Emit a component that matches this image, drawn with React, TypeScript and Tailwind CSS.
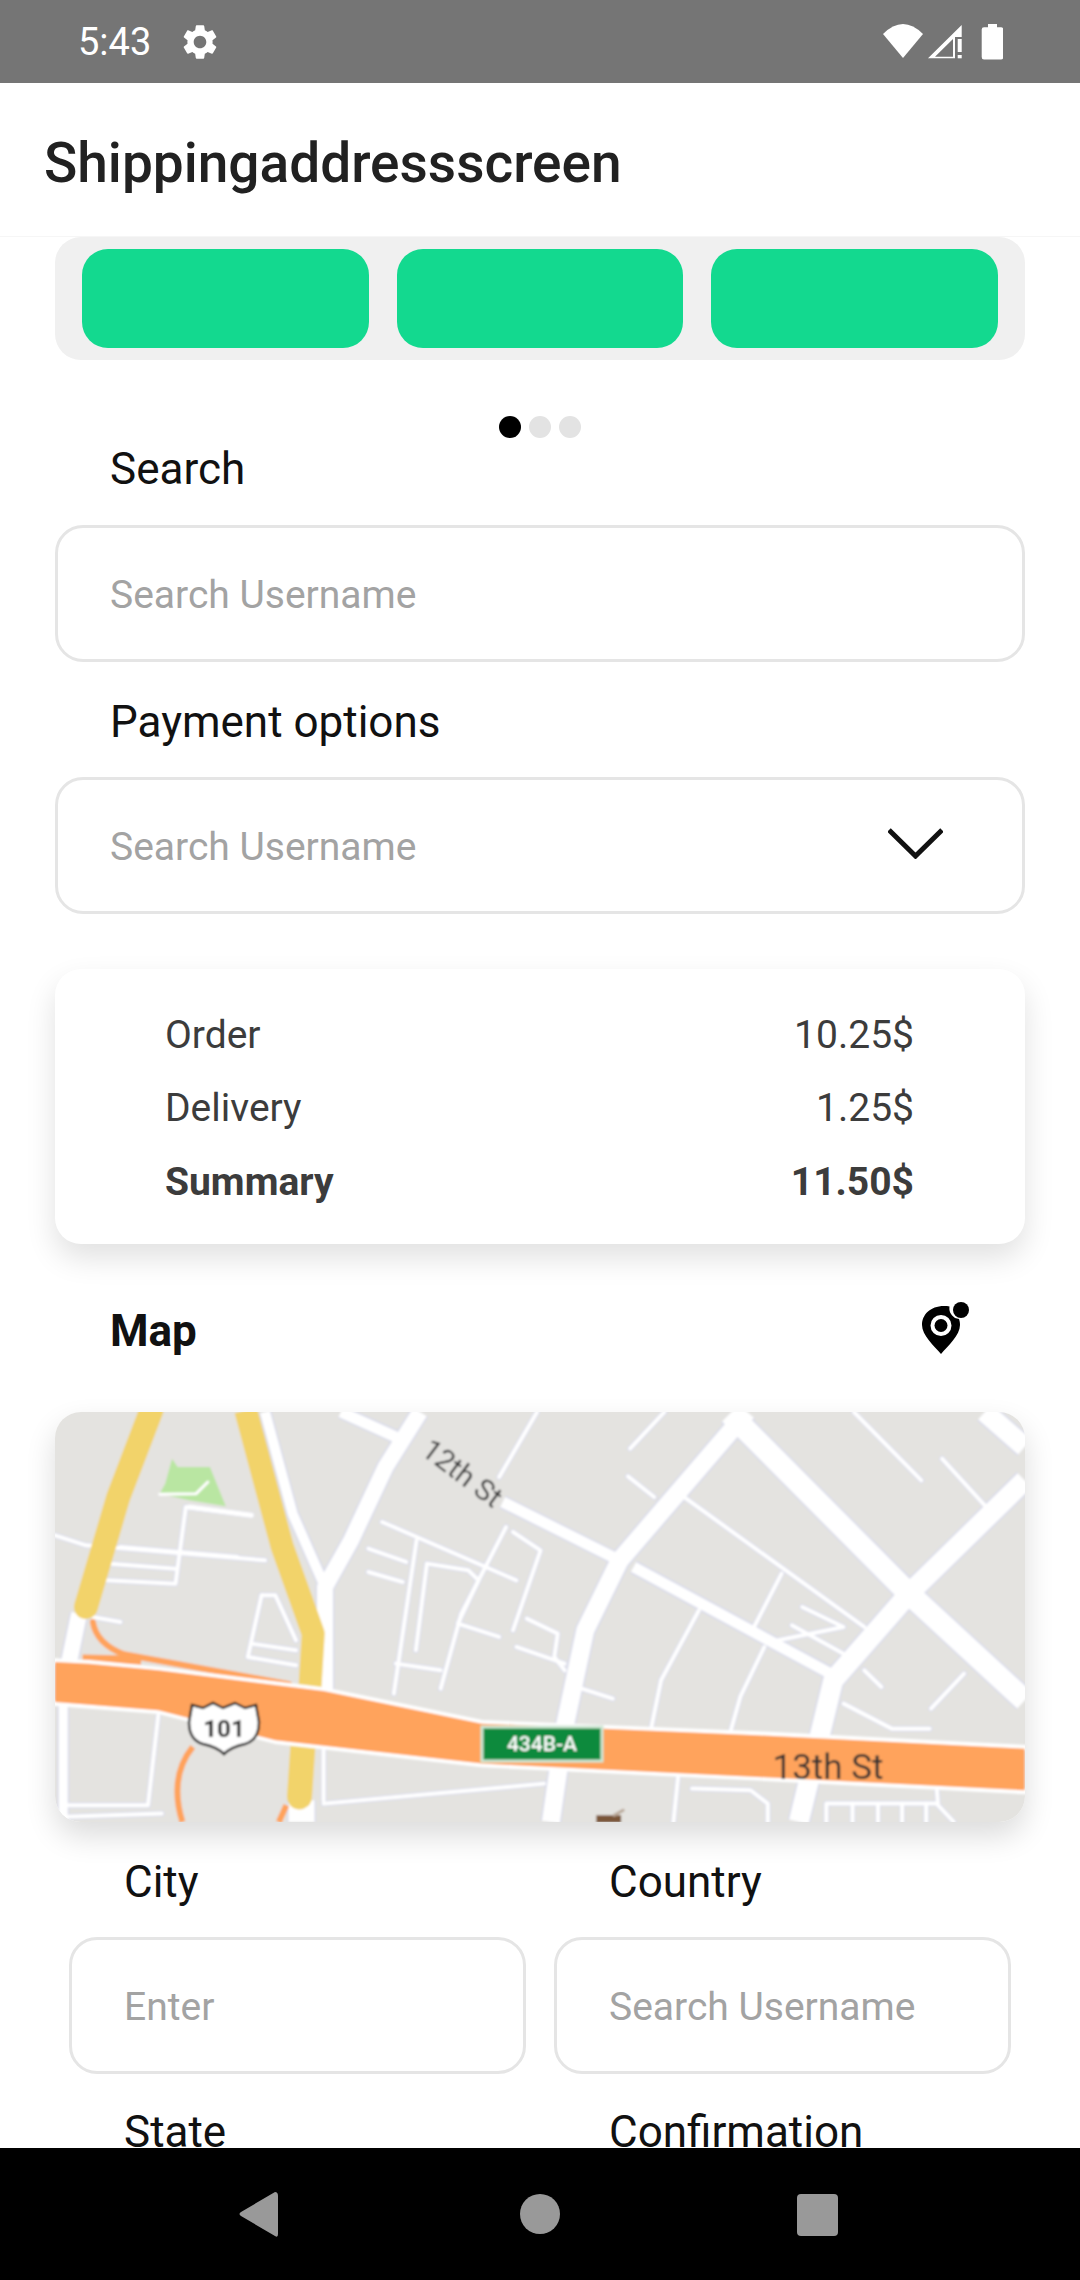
const Field = ({ text, className = "" }: { text: string; className?: string }) => (
  <div className={`flex h-[137px] items-center rounded-[28px] border-[3px] border-[#e5e5e5] bg-white pl-[52px] pr-[52px] pt-[3px] text-[39px] text-[#a3a3a3] ${className}`}>
    {text}
  </div>
);

const Label = ({ text, className = "" }: { text: string; className?: string }) => (
  <div className={`h-[49px] pl-[55px] text-[44px] leading-[49px] text-[#111111] ${className}`}>{text}</div>
);

const Row = ({ a, b, bold = false }: { a: string; b: string; bold?: boolean }) => (
  <div className={`flex h-[73.5px] items-center justify-between text-[39px] text-[#3c3c3c] ${bold ? "font-bold" : ""}`}>
    <span>{a}</span>
    <span>{b}</span>
  </div>
);

const casing = "#d8daea";

const major: [string, number][] = [
  ["M495 95 L575 170", 11],
  ["M730 365 L890 530", 11],
  ["M920 560 L1215 890", 11],
  ["M610 95 L560 260 L510 480 L472 620 L472 930", 16],
  ["M1085 95 L900 540 L850 750 L820 1040 L800 1325", 18],
  ["M1060 100 L1320 640 L1488 960", 22],
  ["M1488 300 L1320 640 L1210 900 L1160 1325", 20],
  ["M1430 95 L1488 200", 20],
  ["M385 95 L425 400 L472 620", 10],
  ["M115 700 L100 850", 16],
  ["M92 965 L92 1325", 9],
  ["M438 1260 L438 1325", 26],
];

const minor: string[] = [
  "M780 95 L725 290",
  "M965 95 L915 205",
  "M1240 95 L1338 300",
  "M1368 235 L1430 375",
  "M912 288 L950 350",
  "M990 345 L1255 740",
  "M555 425 L750 600",
  "M535 505 L590 545",
  "M535 575 L585 605",
  "M605 480 L572 940",
  "M735 440 L670 700 L640 925",
  "M745 455 L785 510 L745 750",
  "M620 550 L680 570 L695 600 L665 730 L725 770",
  "M620 550 L604 810",
  "M765 715 L810 760 L805 830 L820 870",
  "M750 800 L820 850",
  "M575 850 L640 870",
  "M845 925 L890 955",
  "M1015 690 L960 900 L945 1050",
  "M1110 800 L1075 950 L1060 1060",
  "M1135 580 L1095 740",
  "M1165 680 L1225 740 L1130 780",
  "M1150 735 L1225 820",
  "M1255 870 L1280 920",
  "M1400 880 L1352 985",
  "M1225 970 L1295 1045 L1350 1045",
  "M80 465 L125 495 L385 540",
  "M175 500 L345 530",
  "M160 550 L255 565",
  "M155 600 L255 610 L270 380 L365 405",
  "M380 645 L360 830 L430 855",
  "M380 645 L400 645 L430 780",
  "M365 790 L430 810",
  "M135 710 L175 725",
  "M230 1005 L215 1275 L90 1275",
  "M85 1310 L235 1300",
  "M470 1270 L790 1210",
  "M985 1185 L978 1325",
  "M1005 1225 L1090 1230 L1115 1270 L1115 1325",
  "M1200 1325 L1200 1270 L1360 1270 L1385 1325",
  "M1238 1270 L1238 1325",
  "M1275 1270 L1275 1325",
  "M1310 1270 L1310 1325",
  "M1345 1270 L1345 1325",
  "M1360 1215 L1362 1270",
  "M470 1110 L470 1260",
];

const MapView = () => (
  <svg viewBox="0 0 970 410" className="block h-full w-full" xmlns="http://www.w3.org/2000/svg">
    <defs>
      <filter id="soft" filterUnits="userSpaceOnUse" x="-20" y="-20" width="1010" height="450">
        <feGaussianBlur stdDeviation="0.9" />
      </filter>
    </defs>
    <g filter="url(#soft)">
      <rect x="-20" y="-20" width="1010" height="450" fill="#e4e3e0" />
      <g transform="translate(-55.1 -31.67) scale(0.6887 0.3333)" fill="none" strokeLinecap="round" strokeLinejoin="round">
        {minor.map((d, i) => (
          <path key={`c${i}`} d={d} stroke={casing} strokeWidth={6} vectorEffect="non-scaling-stroke" />
        ))}
        {major.map(([d, w], i) => (
          <path key={`d${i}`} d={d} stroke={casing} strokeWidth={w + 3} strokeLinecap="butt" vectorEffect="non-scaling-stroke" />
        ))}
        {minor.map((d, i) => (
          <path key={`e${i}`} d={d} stroke="#ffffff" strokeWidth={4} vectorEffect="non-scaling-stroke" />
        ))}
        {major.map(([d, w], i) => (
          <path key={`f${i}`} d={d} stroke="#ffffff" strokeWidth={w} strokeLinecap="butt" vectorEffect="non-scaling-stroke" />
        ))}
        <polygon points="250,235 258,260 305,260 328,378 275,360 232,340 240,310" fill="#b9e6a2" />
        <path d="M275 380 L365 405" stroke="#ffffff" strokeWidth={5} vectorEffect="non-scaling-stroke" />
        <path d="M232 342 L285 340 L302 305" stroke="#ffffff" strokeWidth={3} vectorEffect="non-scaling-stroke" />
        <path d="M220 90 L172 350 L125 680" stroke="#f2d36a" strokeWidth={24} vectorEffect="non-scaling-stroke" />
        <path d="M357 90 L410 500 L455 760 L450 930" stroke="#f2d36a" strokeWidth={23} strokeLinecap="butt" vectorEffect="non-scaling-stroke" />
        <path d="M440 1095 L435 1250" stroke="#f2d36a" strokeWidth={25} vectorEffect="non-scaling-stroke" />
        <path d="M135 725 Q140 790 180 822 L420 912" stroke="#ffa35c" strokeWidth={6} vectorEffect="non-scaling-stroke" />
        <path d="M120 836 L205 840" stroke="#ffa35c" strokeWidth={9} strokeLinecap="butt" vectorEffect="non-scaling-stroke" />
        <path d="M280 1100 Q245 1190 265 1325" stroke="#ffa35c" strokeWidth={6} strokeLinecap="butt" vectorEffect="non-scaling-stroke" />
        <path d="M416 1275 L405 1325" stroke="#ffa35c" strokeWidth={6} strokeLinecap="butt" vectorEffect="non-scaling-stroke" />
        <path d="M80 843 L130 848 L230 868 L470 930 L700 1028 L1100 1062 L1488 1103" stroke="#ffffff" strokeWidth={6} vectorEffect="non-scaling-stroke" />
        <path d="M80 968 L230 992 L400 1082 L700 1152 L1100 1192 L1488 1233" stroke="#ffffff" strokeWidth={6} vectorEffect="non-scaling-stroke" />
        <polygon points="80,845 130,850 230,870 470,932 700,1030 1100,1065 1488,1105 1488,1230 1100,1190 700,1150 400,1080 230,990 80,965" fill="#ffa35c" />
        <rect x="866" y="1305" width="36" height="22" fill="#795438" />
        <path d="M892 1305 L905 1290" stroke="#b9a898" strokeWidth={3} vectorEffect="non-scaling-stroke" />
      </g>
      <path d="M137 293 L148 296 L158 291 L168 296 L180 291 L190 296 L201 293 L204 310 Q204 328 190 332 Q176 335 169 342 Q162 335 148 332 Q134 328 134 310 Z" fill="#ffffff" stroke="#222222" strokeWidth="2.5" />
      <text x="169" y="325" textAnchor="middle" fontSize="24" fontWeight="700" fill="#222222" fontFamily="Roboto, sans-serif">101</text>
      <rect x="427" y="315" width="120" height="34" fill="#0f8a3e" stroke="#cfe6d4" strokeWidth="3" />
      <text x="487" y="339" textAnchor="middle" fontSize="21" fontWeight="500" fill="#ffffff" fontFamily="Roboto, sans-serif">434B-A</text>
      <text x="773" y="367" textAnchor="middle" fontSize="35" fill="#333333" fontFamily="Roboto, sans-serif">13th St</text>
      <text transform="translate(406 63) rotate(37)" textAnchor="middle" dominantBaseline="middle" fontSize="29" fill="#3a3a3a" fontFamily="Roboto, sans-serif">12th St</text>
    </g>
  </svg>
);

export default function App() {
  return (
    <div className="flex h-[2280px] w-[1080px] flex-col overflow-hidden bg-white font-['Roboto',sans-serif]">
      <div className="flex h-[83px] shrink-0 items-center justify-between bg-[#757575] pl-[78px] pr-[77px] text-white">
        <div className="flex items-center gap-[28px]">
          <span className="text-[38px] leading-none">5:43</span>
          <svg viewBox="0 0 24 24" className="h-[42px] w-[42px]" fill="#ffffff">
            <path d="M19.14 12.94c.04-.3.06-.61.06-.94 0-.32-.02-.64-.07-.94l2.03-1.58c.18-.14.23-.41.12-.61l-1.92-3.32c-.12-.22-.37-.29-.59-.22l-2.39.96c-.5-.38-1.03-.7-1.62-.94l-.36-2.54c-.04-.24-.24-.41-.48-.41h-3.84c-.24 0-.43.17-.47.41l-.36 2.54c-.59.24-1.13.57-1.62.94l-2.39-.96c-.22-.08-.47 0-.59.22L2.74 8.87c-.12.21-.08.47.12.61l2.03 1.58c-.05.3-.09.63-.09.94s.02.64.07.94l-2.03 1.58c-.18.14-.23.41-.12.61l1.92 3.32c.12.22.37.29.59.22l2.39-.96c.5.38 1.03.7 1.62.94l.36 2.54c.05.24.24.41.48.41h3.84c.24 0 .44-.17.47-.41l.36-2.54c.59-.24 1.13-.56 1.62-.94l2.39.96c.22.08.47 0 .59-.22l1.92-3.32c.12-.22.07-.47-.12-.61l-2.01-1.58zM12 15.6c-1.98 0-3.6-1.62-3.6-3.6s1.62-3.6 3.6-3.6 3.6 1.62 3.6 3.6-1.62 3.6-3.6 3.6z" />
          </svg>
        </div>
        <svg viewBox="0 0 120 36" className="h-[36px] w-[120px]" fill="#ffffff">
          <path d="M0 10 Q20 -10 40 10 L20 34 Z" />
          <path fillRule="evenodd" d="M78.7 1 L78.7 13 L72 13 L72 34.3 L45 34.3 Z M52 32.7 L70 32.7 L70 15 Z" />
          <rect x="74.7" y="15" width="4" height="13" />
          <rect x="74.7" y="31" width="4" height="3.3" />
          <path d="M105 3.3 L105 0 L114 0 L114 3.3 L118 3.3 Q120.3 3.3 120.3 5.5 L120.3 33 Q120.3 35.5 118 35.5 L101 35.5 Q98.7 35.5 98.7 33 L98.7 5.5 Q98.7 3.3 101 3.3 Z" />
        </svg>
      </div>
      <div className="flex h-[154px] shrink-0 items-center border-b border-[#f6f6f6] bg-white pl-[44px] pt-[8px] text-[55px] font-medium leading-none text-[#212121]">
        Shippingaddressscreen
      </div>
      <main className="relative min-h-0 flex-1 overflow-hidden">
        <div className="mx-[55px] flex h-[123px] gap-[28px] rounded-[26px] bg-[#f0f0f0] px-[27px] pt-[12px]">
          <div className="h-[99px] flex-1 rounded-[26px] bg-[#13d98f]" />
          <div className="h-[99px] flex-1 rounded-[26px] bg-[#13d98f]" />
          <div className="h-[99px] flex-1 rounded-[26px] bg-[#13d98f]" />
        </div>
        <div className="mt-[56px] flex justify-center gap-[8px]">
          <div className="h-[22px] w-[22px] rounded-full bg-black" />
          <div className="h-[22px] w-[22px] rounded-full bg-[#e3e3e3]" />
          <div className="h-[22px] w-[22px] rounded-full bg-[#e3e3e3]" />
        </div>
        <div className="mx-[55px]">
          <Label text="Search" className="mt-[7px]" />
          <Field text="Search Username" className="mt-[31px]" />
          <Label text="Payment options" className="mt-[36px]" />
          <div className="relative mt-[30px]">
            <Field text="Search Username" />
            <svg viewBox="0 0 55 31" className="absolute left-[833px] top-[51px] h-[31px] w-[55px]" fill="none" stroke="#111111" strokeWidth="5">
              <path d="M1 2 L27.5 28 L54 2" />
            </svg>
          </div>
          <div className="mt-[55px] h-[275px] rounded-[26px] bg-white pl-[110px] pr-[111px] pt-[29px] shadow-[0_14px_30px_rgba(0,0,0,0.12)]">
            <Row a="Order" b="10.25$" />
            <Row a="Delivery" b="1.25$" />
            <Row a="Summary" b="11.50$" bold />
          </div>
          <div className="mt-[62px] flex h-[49px] items-center justify-between pl-[55px] pr-[55px]">
            <span className="text-[44px] font-bold text-[#111111]">Map</span>
            <svg viewBox="0 0 48 52" className="mb-[6px] h-[52px] w-[48px]" fill="#000000">
              <path fillRule="evenodd" d="M22 4 C8 4 0 13 0 23 C0 33 12 44 19 52 C26 44 38 33 38 23 C38 20 37.5 18.5 37 17 L33 16 C28 12 27 9 27.5 4.5 C26 4 24 4 22 4 Z M19 13 A10.5 10.5 0 1 0 19 34 A10.5 10.5 0 1 0 19 13 Z" />
              <circle cx="19" cy="23.5" r="6.5" />
              <circle cx="39" cy="8" r="8" />
            </svg>
          </div>
          <div className="mt-[57px] h-[410px] overflow-hidden rounded-[26px] shadow-[0_14px_30px_rgba(0,0,0,0.14)]">
            <MapView />
          </div>
          <div className="mx-[14px] mt-[36px] grid grid-cols-2 gap-x-[28px]">
            <Label text="City" />
            <Label text="Country" />
            <Field text="Enter" className="mt-[30px]" />
            <Field text="Search Username" className="mt-[30px]" />
            <Label text="State" className="mt-[34px]" />
            <Label text="Confirmation" className="mt-[34px]" />
          </div>
        </div>
      </main>
      <div className="flex h-[132px] shrink-0 items-center bg-black">
        <svg viewBox="0 0 1080 132" className="h-[132px] w-[1080px]" fill="#999999">
          <path d="M275 44 Q278 44 278 48 L278 86 Q278 90 275 88 L241 68 Q238 66 241 64 Z" />
          <circle cx="540" cy="66" r="20" />
          <rect x="797" y="46" width="41" height="42" rx="4" />
        </svg>
      </div>
    </div>
  );
}
